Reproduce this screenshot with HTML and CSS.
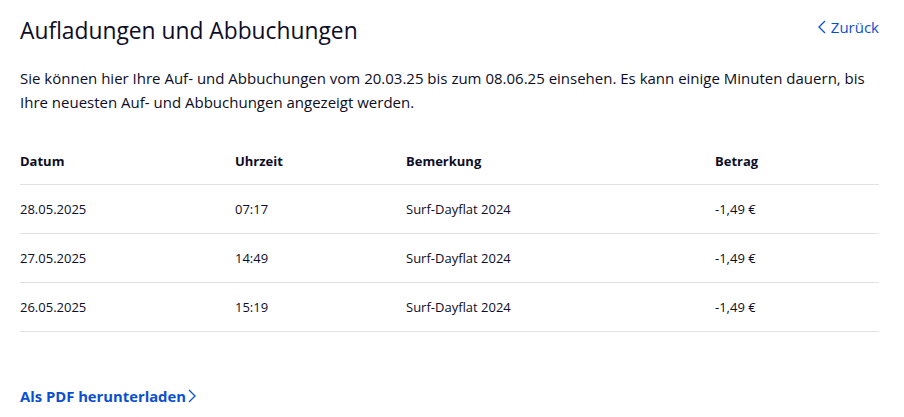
FILE: index.html
```html
<!DOCTYPE html>
<html lang="de">
<head>
<meta charset="utf-8">
<title>Aufladungen und Abbuchungen</title>
<link rel="stylesheet" href="styles.css">
</head>
<body>
<main class="page">
  <header class="head">
    <h1 class="title">Aufladungen und Abbuchungen</h1>
    <a class="back" href="#"><svg class="chev" viewBox="0 0 8 14" width="8" height="14"><path d="M7 1 1 7l6 6" fill="none" stroke="currentColor" stroke-width="1.3"/></svg>Zurück</a>
  </header>
  <p class="intro">Sie können hier Ihre Auf- und Abbuchungen vom 20.03.25 bis zum 08.06.25 einsehen. Es kann einige Minuten dauern, bis Ihre neuesten Auf- und Abbuchungen angezeigt werden.</p>
  <div class="table">
    <div class="row row-head">
      <div>Datum</div><div>Uhrzeit</div><div>Bemerkung</div><div>Betrag</div>
    </div>
    <div class="row">
      <div>28.05.2025</div><div>07:17</div><div>Surf-Dayflat 2024</div><div>-1,49 €</div>
    </div>
    <div class="row">
      <div>27.05.2025</div><div>14:49</div><div>Surf-Dayflat 2024</div><div>-1,49 €</div>
    </div>
    <div class="row">
      <div>26.05.2025</div><div>15:19</div><div>Surf-Dayflat 2024</div><div>-1,49 €</div>
    </div>
  </div>
  <a class="pdf" href="#">Als PDF herunterladen<svg class="chev" viewBox="0 0 8 14" width="8" height="14"><path d="M1 1l6 6-6 6" fill="none" stroke="currentColor" stroke-width="1.3"/></svg></a>
</main>
</body>
</html>
```

FILE: styles.css
```css
* { box-sizing: border-box; }
html, body { margin: 0; padding: 0; background: #fff; }
body {
  font-family: "Open Sans", "Noto Sans", sans-serif;
  color: #0d0d26;
}
.page {
  padding: 13px 25px 0 20px;
  display: flex;
  flex-direction: column;
}
.head {
  display: flex;
  justify-content: space-between;
  align-items: flex-start;
}
.title {
  margin: 0;
  font-size: 22.8px;
  font-weight: 400;
  line-height: 35px;
  letter-spacing: 0;
}
.back {
  display: flex;
  align-items: center;
  gap: 5px;
  color: #0a4fd1;
  text-decoration: none;
  font-size: 15px;
  line-height: 28px;
}
.intro {
  margin: 18px 0 0;
  font-size: 15px;
  line-height: 24px;
}
.table {
  margin-top: 24px;
  display: flex;
  flex-direction: column;
}
.row {
  display: grid;
  grid-template-columns: 215px 171px 309px 1fr;
  align-items: center;
  height: 49px;
  border-bottom: 1px solid #e2e2e2;
  font-size: 13px;
}
.row-head {
  height: 47px;
  font-weight: 700;
}
.pdf {
  margin-top: 54px;
  align-self: flex-start;
  display: flex;
  align-items: center;
  gap: 2px;
  color: #0a4fd1;
  text-decoration: none;
  font-weight: 700;
  font-size: 14.8px;
  line-height: 20px;
}
.chev { display: block; }
```
